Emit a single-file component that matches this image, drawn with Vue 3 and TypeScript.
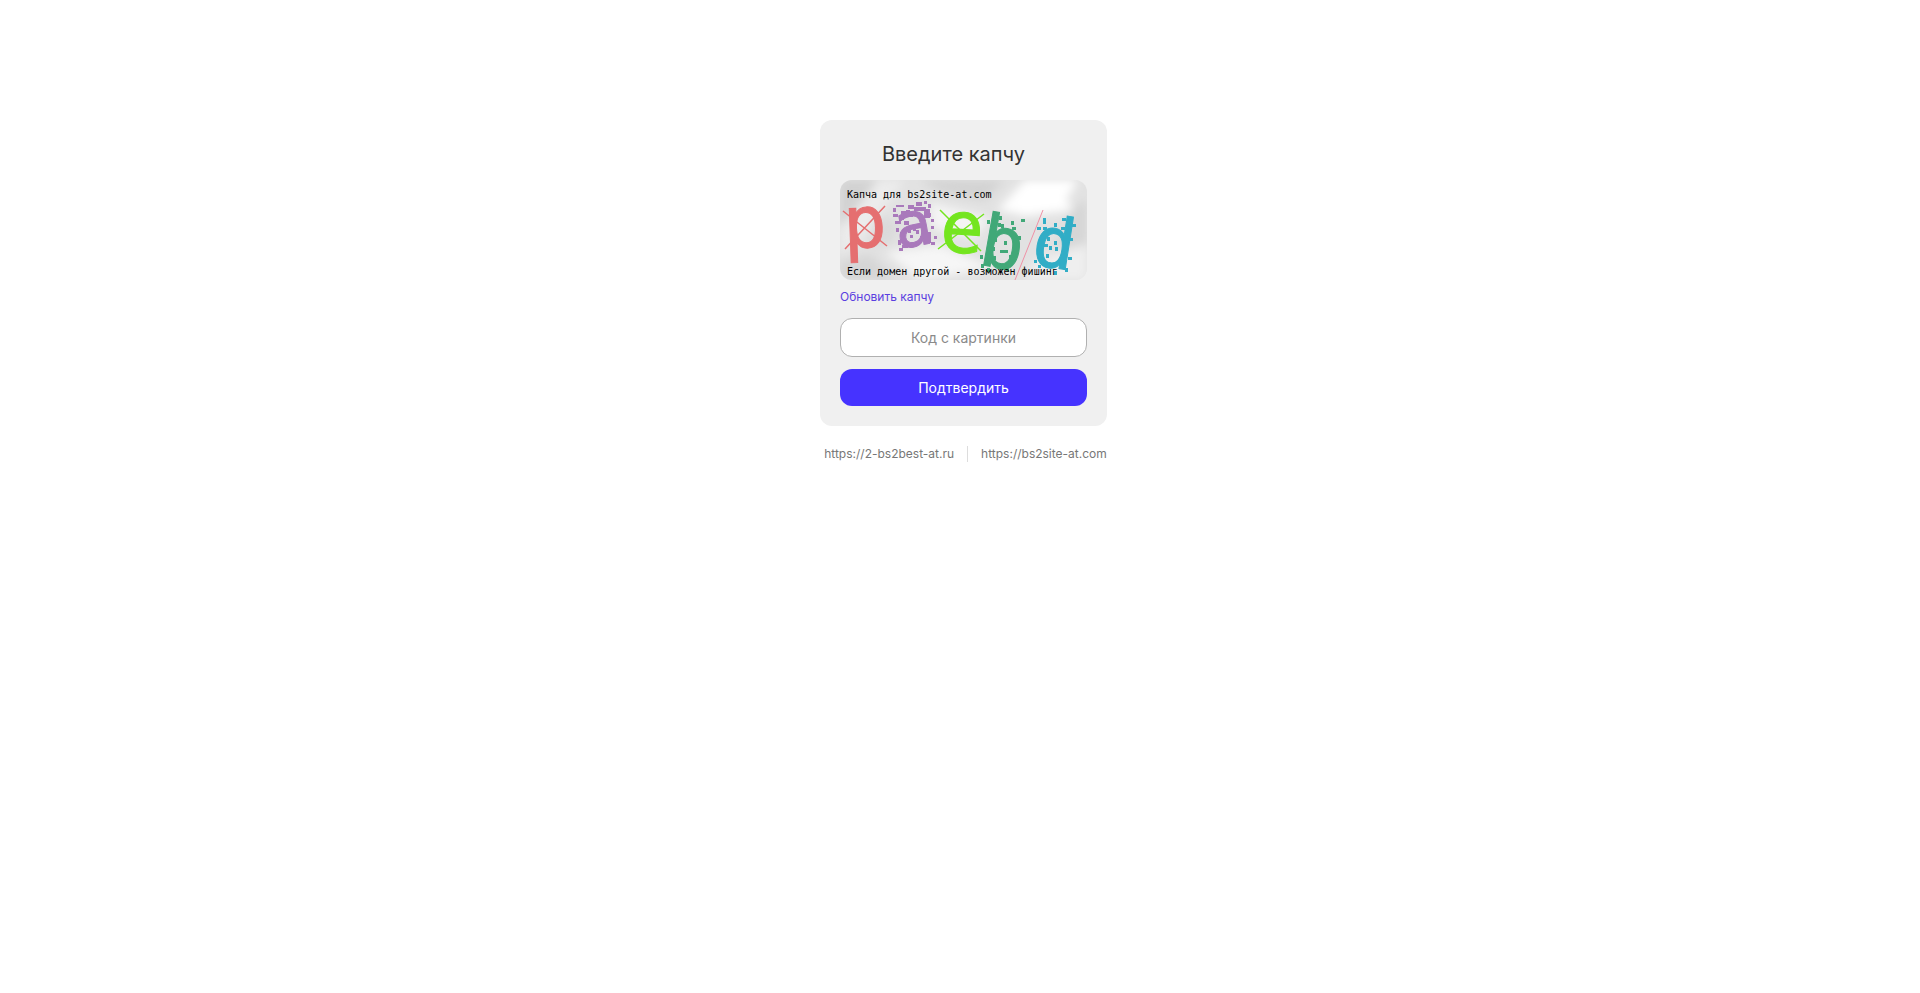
<script setup lang="ts">
import { ref } from 'vue'

interface Speck { x: number; y: number; w: number; h: number }

const code = ref<string>('')
const mirrors: string[] = ['https://2-bs2best-at.ru', 'https://bs2site-at.com']

const speck = (s: number[]): Speck => ({ x: s[0], y: s[1], w: s[2] ?? 3, h: s[3] ?? 4 })

const violetSpecks = [
  [53, 28], [56, 25, 8, 2], [61, 31, 5, 3], [68, 25, 6, 4], [76, 22, 6, 4], [84, 21, 3, 3], [88, 24], [53, 34, 5, 3],
  [55, 41, 6, 3], [59, 37, 5, 3], [56, 48, 3, 4], [60, 52, 3, 5], [58, 60, 3, 5], [62, 65, 6, 3], [91, 39, 3, 3],
  [91, 46, 3, 3], [94, 56, 3, 3], [91, 62, 4, 3], [67, 34, 6, 3], [64, 41, 5, 4], [76, 50, 3, 4],
  [70, 55, 3, 3], [59, 68, 4, 3], [84, 29, 6, 9], [86, 52, 5, 11], [66, 30, 4, 3], [74, 27, 12, 4], [88, 33, 3, 4],
  [73, 48, 3, 3], [80, 56, 3, 3], [68, 50, 3, 3],
].map(speck)
const greenSpecks = [
  [159, 36], [158, 43], [147, 40], [171, 41], [181, 39, 4, 3], [172, 47, 4, 3], [178, 56], [161, 44],
  [154, 58], [164, 61], [152, 67], [169, 75], [160, 70, 8, 3], [140, 75], [141, 84], [153, 76], [166, 87], [147, 88],
].map(speck)
const blueSpecks = [
  [203, 38, 3, 6], [197, 47, 4, 3], [203, 47, 4, 3], [207, 57], [222, 38, 4, 3], [214, 43], [221, 47, 4, 3],
  [232, 44, 4, 3], [202, 64, 6, 3], [209, 66], [214, 61], [206, 74], [215, 67], [229, 58, 4, 3],
  [228, 77, 4, 3], [194, 80, 3, 3], [198, 85, 3, 3], [225, 88], [214, 91],
].map(speck)
</script>

<template>
  <main class="page">
    <form class="card" @submit.prevent>
      <h1 class="title">Введите капчу</h1>
      <svg class="captcha" viewBox="0 0 247 100" role="img" aria-label="Капча">
        <defs>
          <filter id="soft" x="-30%" y="-30%" width="160%" height="160%">
            <feGaussianBlur stdDeviation="5" />
          </filter>
        </defs>
        <rect width="247" height="100" fill="#e2e2e2" />
        <g filter="url(#soft)">
          <path d="M0 0H40L18 30L0 45Z" fill="#d2d2d2" />
          <path d="M38 0L65 0L20 60L0 75V50Z" fill="#ececec" />
          <path d="M80 0H165L145 20L100 12Z" fill="#d3d3d3" />
          <path d="M185 0H238L225 22L190 36L158 30Z" fill="#fff" />
          <path d="M180 10L212 5L235 30L180 36Z" fill="#fff" />
          <path d="M40 35L60 45L50 65L30 65Z" fill="#dadada" />
          <path d="M90 22L150 38L135 58L92 48Z" fill="#f4f4f4" />
          <path d="M0 82L30 74L55 100H0Z" fill="#d6d6d6" />
          <path d="M45 72L100 65L155 88L80 100Z" fill="#f6f6f6" />
          <path d="M232 28L247 20V62L215 70Z" fill="#d6d6d6" />
          <path d="M195 80L247 66V100H185Z" fill="#efefef" />
        </g>
        <g class="letter">
          <path d="M3 31L47 66M45 26L5 69" fill="none" stroke="#e56f70" stroke-width="1.5" />
          <text x="4" y="68" font-size="72" transform="rotate(-2 4 68)" fill="#e56f70" stroke="#e56f70">p</text>
          <text x="58" y="69" font-size="62" transform="rotate(-10 58 69)" fill="#a979bb" stroke="#a979bb">a</text>
          <path d="M100 30L141 71M144 34L98 69" fill="none" stroke="#74e51f" stroke-width="1.5" />
          <text x="99" y="71" font-size="72" transform="rotate(4 99 71)" fill="#74e51f" stroke="#74e51f">e</text>
          <text x="137" y="84" font-size="72" transform="rotate(10 137 84)" fill="#41a878" stroke="#41a878">b</text>
          <text x="190" y="84" font-size="70" transform="rotate(9 190 84)" fill="#31adc6" stroke="#31adc6">d</text>
        </g>
        <rect v-for="(s, i) in violetSpecks" :key="'v' + i" :x="s.x" :y="s.y" :width="s.w" :height="s.h" fill="#a979bb" />
        <rect v-for="(s, i) in greenSpecks" :key="'g' + i" :x="s.x" :y="s.y" :width="s.w" :height="s.h" fill="#41a878" />
        <rect v-for="(s, i) in blueSpecks" :key="'b' + i" :x="s.x" :y="s.y" :width="s.w" :height="s.h" fill="#31adc6" />
        <path d="M203 30L175 100" fill="none" stroke="#ef91a6" stroke-width="1" />
        <g class="note">
          <text x="7" y="18">Капча для bs2site-at.com</text>
          <text x="7" y="95">Если домен другой - возможен фишинг</text>
        </g>
      </svg>
      <a class="refresh" href="#">Обновить капчу</a>
      <input v-model="code" class="field" type="text" placeholder="Код с картинки" aria-label="Код с картинки" autocomplete="off" />
      <button class="submit" type="submit">Подтвердить</button>
    </form>
    <nav class="mirrors" aria-label="Адреса">
      <a v-for="url in mirrors" :key="url" class="mirror" :href="url">{{ url }}</a>
    </nav>
  </main>
</template>

<style>
body {
  margin: 0;
  background: #fff;
}
</style>

<style scoped>
.page {
  display: flex;
  flex-direction: column;
  align-items: center;
  padding: 120px 0 0 7px;
  font-family: Inter, "Liberation Sans", sans-serif;
  color: #333;
}
.card {
  box-sizing: border-box;
  display: flex;
  flex-direction: column;
  width: 100%;
  max-width: 287px;
  padding: 20px;
  border-radius: 12px;
  background: #f0f0f0;
}
.title {
  margin: 0 0 12px;
  padding-right: 20px;
  font-size: 20px;
  line-height: 28px;
  font-weight: 400;
  text-align: center;
}
.captcha {
  display: block;
  width: 100%;
  border-radius: 12px;
}
.letter {
  font-family: "DejaVu Sans Mono", monospace;
  stroke-width: 1px;
}
.note {
  font-family: "DejaVu Sans Mono", monospace;
  font-size: 10px;
  fill: #000;
}
.refresh {
  align-self: flex-start;
  margin: 10px 0 14px;
  font-size: 12px;
  line-height: 14px;
  color: #5a3fe0;
  text-decoration: none;
}
.field {
  box-sizing: border-box;
  width: 100%;
  height: 39px;
  margin: 0 0 12px;
  padding: 0 12px;
  border: 1px solid #b0b0b0;
  border-radius: 12px;
  background: #fff;
  font: inherit;
  font-size: 14px;
  text-align: center;
  color: #333;
}
.field::placeholder {
  color: #8a8a8a;
  opacity: 1;
}
.submit {
  height: 37px;
  padding: 0;
  border: 0;
  border-radius: 12px;
  background: #4633ff;
  font: inherit;
  font-size: 14px;
  color: #fff;
  cursor: pointer;
}
.mirrors {
  display: flex;
  margin-top: 20px;
  padding-left: 4px;
}
.mirror {
  padding: 0 13px;
  font-size: 12px;
  line-height: 16px;
  color: #777;
  text-decoration: none;
}
.mirror + .mirror {
  border-left: 1px solid #ddd;
}
</style>
